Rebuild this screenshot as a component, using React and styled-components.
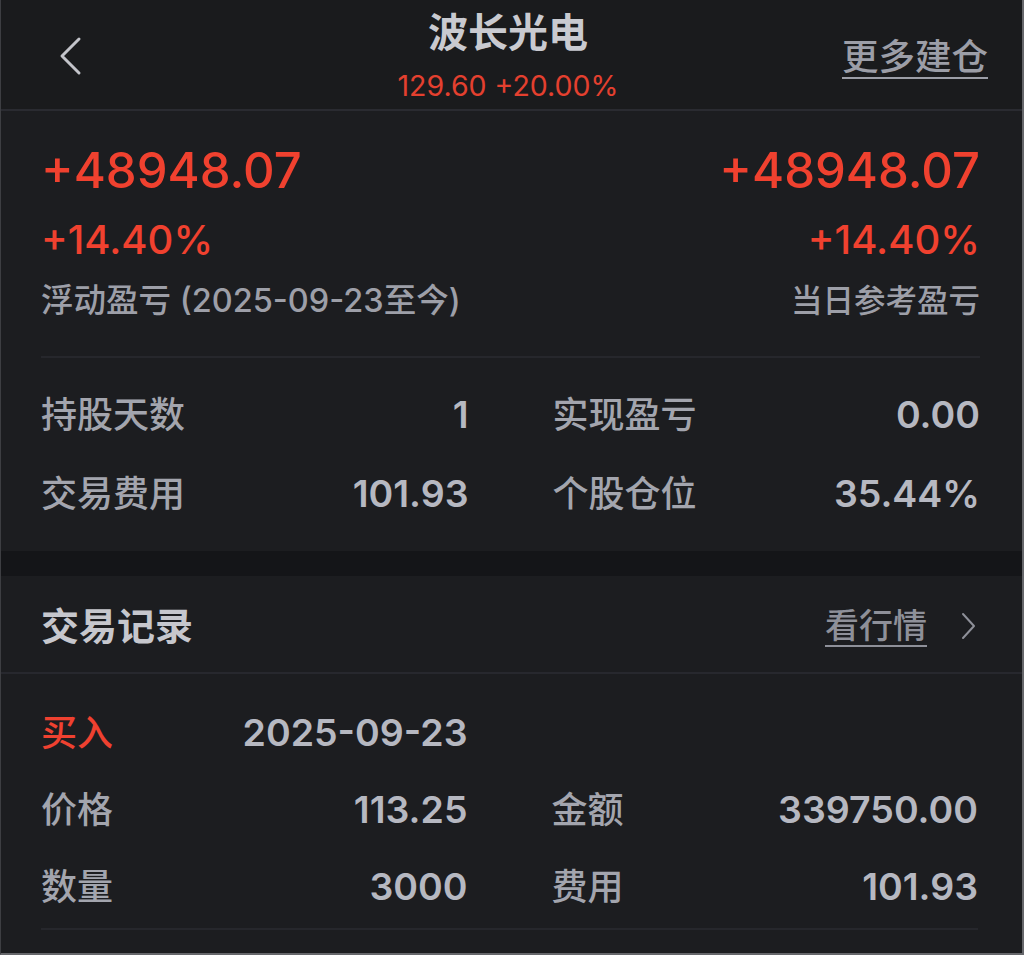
import React from "react";
import styled, { createGlobalStyle } from "styled-components";

const GlobalStyle = createGlobalStyle`
  html, body {
    margin: 0;
    padding: 0;
    background: #1c1d20;
  }
  * {
    box-sizing: border-box;
  }
`;

const FONT = `Inter, "Noto Sans CJK SC", sans-serif`;

const stats = [
  { label: "持股天数", value: "1" },
  { label: "实现盈亏", value: "0.00" },
  { label: "交易费用", value: "101.93" },
  { label: "个股仓位", value: "35.44%" },
];

const trade = [
  { label: "价格", value: "113.25" },
  { label: "金额", value: "339750.00" },
  { label: "数量", value: "3000" },
  { label: "费用", value: "101.93" },
];

const App = () => {
  return (
    <>
      <GlobalStyle />
      <Page>
        <Header>
          <BackButton aria-label="返回">
            <svg width="26" height="40" viewBox="0 0 26 40">
              <polyline
                points="21,3 4,20 21,37"
                fill="none"
                stroke="#c3c4ca"
                strokeWidth="3"
                strokeLinecap="round"
                strokeLinejoin="round"
              />
            </svg>
          </BackButton>
          <TitleBlock>
            <Title>波长光电</Title>
            <Quote>129.60 +20.00%</Quote>
          </TitleBlock>
          <HeaderLink>更多建仓</HeaderLink>
        </Header>

        <Card>
          <PnlRow>
            <PnlBlock $align="left">
              <BigNumber>+48948.07</BigNumber>
              <Percent>+14.40%</Percent>
              <PnlLabel>浮动盈亏 (2025-09-23至今)</PnlLabel>
            </PnlBlock>
            <PnlBlock $align="right">
              <BigNumber>+48948.07</BigNumber>
              <Percent>+14.40%</Percent>
              <PnlLabel $small>当日参考盈亏</PnlLabel>
            </PnlBlock>
          </PnlRow>
          <Divider />
          <StatGrid>
            {stats.map((s) => (
              <Stat key={s.label}>
                <Label>{s.label}</Label>
                <Value>{s.value}</Value>
              </Stat>
            ))}
          </StatGrid>
        </Card>

        <Gap />

        <SectionHead>
          <SectionTitle>交易记录</SectionTitle>
          <MoreLink>
            <span>看行情</span>
            <svg width="18" height="30" viewBox="0 0 18 30">
              <polyline
                points="4,3 15,15 4,27"
                fill="none"
                stroke="#8e9099"
                strokeWidth="2"
                strokeLinecap="round"
                strokeLinejoin="round"
              />
            </svg>
          </MoreLink>
        </SectionHead>

        <TradeList>
          <StatGrid>
            <Stat>
              <Label $buy>买入</Label>
              <Value>2025-09-23</Value>
            </Stat>
            <Stat />
            {trade.map((t) => (
              <Stat key={t.label}>
                <Label>{t.label}</Label>
                <Value>{t.value}</Value>
              </Stat>
            ))}
          </StatGrid>
          <Divider />
        </TradeList>
      </Page>
    </>
  );
};

const Page = styled.div`
  width: 1024px;
  min-height: 955px;
  background: #1c1d20;
  border-left: 1px solid #3d3e42;
  border-right: 2px solid #66676b;
  border-bottom: 2px solid #66676b;
  font-family: ${FONT};
  display: flex;
  flex-direction: column;
`;

const Header = styled.header`
  height: 111px;
  display: grid;
  grid-template-columns: 1fr auto 1fr;
  align-items: center;
  padding: 0 34px 0 57px;
  background: #1a1b1d;
  border-bottom: 2px solid #2a2b31;
`;

const BackButton = styled.div`
  display: flex;
  align-items: center;
  height: 40px;
  margin-top: 2px;
`;

const TitleBlock = styled.div`
  display: flex;
  flex-direction: column;
  align-items: center;
  align-self: start;
  padding: 11px 30px 0 0;
`;

const Title = styled.div`
  font-size: 40px;
  line-height: 44px;
  font-weight: 700;
  color: #c9cad0;
`;

const Quote = styled.div`
  margin-top: 15px;
  font-size: 28.5px;
  line-height: 32px;
  color: #e4402f;
`;

const HeaderLink = styled.div`
  justify-self: end;
  font-size: 36.5px;
  line-height: 40px;
  font-weight: 500;
  color: #9c9ea7;
  text-decoration: underline;
  text-decoration-thickness: 2px;
  text-underline-offset: 7px;
  margin-top: 4px;
`;

const Card = styled.section`
  padding: 30px 42px 18px 40px;
`;

const PnlRow = styled.div`
  display: flex;
  justify-content: space-between;
`;

const PnlBlock = styled.div`
  display: flex;
  flex-direction: column;
  align-items: ${(p) => (p.$align === "right" ? "flex-end" : "flex-start")};
`;

const BigNumber = styled.div`
  font-size: 49px;
  line-height: 60px;
  font-weight: 500;
  color: #f0412f;
`;

const Percent = styled.div`
  margin-top: 16px;
  font-size: 40px;
  line-height: 46px;
  font-weight: 500;
  color: #f0412f;
`;

const PnlLabel = styled.div`
  margin-top: 18px;
  font-size: ${(p) => (p.$small ? "31.5px" : "32.5px")};
  line-height: 40px;
  font-weight: 500;
  color: #9d9fa8;
`;

const Divider = styled.div`
  height: 2px;
  background: #26272c;
  margin-top: 35px;
`;

const StatGrid = styled.div`
  display: grid;
  grid-template-columns: 1fr 1fr;
  column-gap: 84px;
  padding-top: 17px;
`;

const Stat = styled.div`
  height: 79px;
  display: flex;
  align-items: center;
  justify-content: space-between;
`;

const Label = styled.span`
  font-size: 36px;
  line-height: 40px;
  font-weight: 500;
  color: ${(p) => (p.$buy ? "#ef4130" : "#a3a5ae")};
`;

const Value = styled.span`
  font-size: 37.5px;
  line-height: 44px;
  font-weight: 600;
  color: #b6b8c1;
`;

const Gap = styled.div`
  height: 25px;
  background: #141518;
`;

const SectionHead = styled.div`
  height: 98px;
  display: flex;
  align-items: center;
  justify-content: space-between;
  padding: 4px 45px 0 40px;
  border-bottom: 2px solid #27282e;
`;

const SectionTitle = styled.h2`
  margin: 0;
  font-size: 38px;
  line-height: 44px;
  font-weight: 700;
  color: #c6c7cd;
`;

const MoreLink = styled.div`
  display: flex;
  align-items: center;
  gap: 32px;
  font-size: 34px;
  line-height: 40px;
  font-weight: 500;
  color: #8e9099;

  & span {
    text-decoration: underline;
    text-decoration-thickness: 2px;
    text-underline-offset: 7px;
  }
`;

const TradeList = styled.section`
  padding: 3px 44px 0 40px;

  & ${StatGrid} {
    padding-top: 17px;
  }

  & ${Stat} {
    height: 77px;
  }

  & ${Divider} {
    margin-top: 3px;
  }
`;

export default App;
